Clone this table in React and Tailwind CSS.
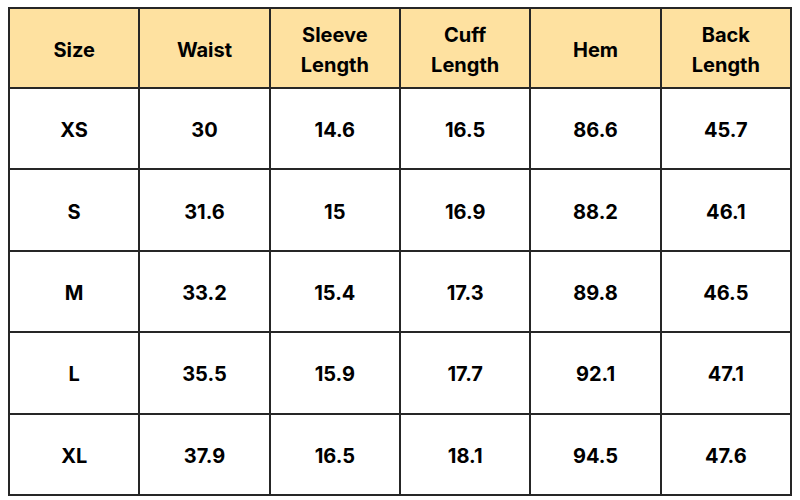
import React from 'react';

const headers = ['Size', 'Waist', 'Sleeve Length', 'Cuff Length', 'Hem', 'Back Length'];

const rows = [
    ['XS', '30', '14.6', '16.5', '86.6', '45.7'],
    ['S', '31.6', '15', '16.9', '88.2', '46.1'],
    ['M', '33.2', '15.4', '17.3', '89.8', '46.5'],
    ['L', '35.5', '15.9', '17.7', '92.1', '47.1'],
    ['XL', '37.9', '16.5', '18.1', '94.5', '47.6'],
];

const App = () => {
    return (
        <div className="w-[800px] h-[500px] bg-white pt-[7px] pl-[8px]" style={{ fontFamily: 'Inter, "Open Sans", sans-serif' }}>
            <div className="w-[784px] grid grid-cols-6 border-l-2 border-t-2 border-[#262626] text-black">
                {headers.map((h) => (
                    <div key={h} className="h-[80px] bg-[#fee1a0] border-r-2 border-b-2 border-[#262626] flex items-center justify-center text-center text-[20px] font-bold leading-[30px] px-6 pt-[3px]">
                        {h}
                    </div>
                ))}
                {rows.map((row) =>
                    row.map((cell, i) => (
                        <div key={row[0] + i} className="h-[81.4px] bg-white border-r-2 border-b-2 border-[#262626] flex items-center justify-center text-[20px] font-bold pt-[3px]">
                            {cell}
                        </div>
                    ))
                )}
            </div>
        </div>
    );
};

export default App;
